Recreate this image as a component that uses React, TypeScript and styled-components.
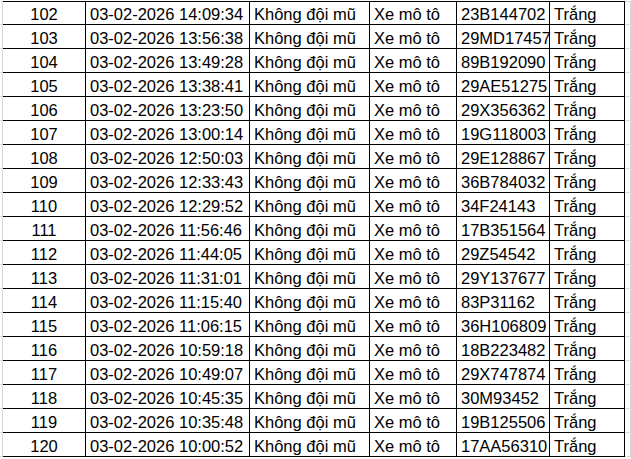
import { createGlobalStyle } from 'styled-components';
import styled from 'styled-components';

const GlobalStyle = createGlobalStyle`
  html, body {
    margin: 0;
    padding: 0;
    background: #ffffff;
  }
  body {
    font-family: 'Liberation Sans', Arial, sans-serif;
    color: #000000;
  }
`;

const Sheet = styled.div`
  width: 631px;
  height: 459px;
  padding-top: 1px;
  box-sizing: border-box;
  overflow: hidden;
  background: #ffffff;
`;

const Table = styled.table`
  border-collapse: separate;
  border-spacing: 0;
  table-layout: fixed;
  width: 631px;
  font-size: 16.5px;
  line-height: 19px;
`;

const Column = styled.col<{ $w: number }>`
  width: ${({ $w }) => $w}px;
`;

const Row = styled.tr<{ $first?: boolean }>`
  height: 24px;

  td {
    border-top: ${({ $first }) => ($first ? '1px solid #000' : 'none')};
  }

  td.gap {
    border-top-color: #d9d9d9;
  }
`;

const Cell = styled.td<{ $align?: 'left' | 'center' }>`
  height: 23px;
  padding: 0 4px;
  box-sizing: border-box;
  vertical-align: bottom;
  text-align: ${({ $align }) => $align || 'left'};
  white-space: nowrap;
  overflow: visible;
  border-right: 1px solid #000;
  border-bottom: 1px solid #000;
`;

const GridCell = styled.td`
  padding: 0;
  border-right: 1px solid #d9d9d9;
  border-bottom: 1px solid #d9d9d9;
`;

const widths = [3, 83, 164, 120, 87, 93, 75, 6];

const rows: [number, string, string][] = [
  [102, '14:09:34', '23B144702'],
  [103, '13:56:38', '29MD17457'],
  [104, '13:49:28', '89B192090'],
  [105, '13:38:41', '29AE51275'],
  [106, '13:23:50', '29X356362'],
  [107, '13:00:14', '19G118003'],
  [108, '12:50:03', '29E128867'],
  [109, '12:33:43', '36B784032'],
  [110, '12:29:52', '34F24143'],
  [111, '11:56:46', '17B351564'],
  [112, '11:44:05', '29Z54542'],
  [113, '11:31:01', '29Y137677'],
  [114, '11:15:40', '83P31162'],
  [115, '11:06:15', '36H106809'],
  [116, '10:59:18', '18B223482'],
  [117, '10:49:07', '29X747874'],
  [118, '10:45:35', '30M93452'],
  [119, '10:35:48', '19B125506'],
  [120, '10:00:52', '17AA56310'],
];

const App = () => {
  return (
    <Sheet>
      <GlobalStyle />
      <Table>
        <colgroup>
          {widths.map((w, i) => (
            <Column key={i} $w={w} />
          ))}
        </colgroup>
        <tbody>
          {rows.map(([no, time, plate], i) => (
            <Row key={no} $first={i === 0}>
              <GridCell className="gap" />
              <Cell $align="center">{no}</Cell>
              <Cell>03-02-2026 {time}</Cell>
              <Cell>Không đội mũ</Cell>
              <Cell>Xe mô tô</Cell>
              <Cell>{plate}</Cell>
              <Cell>Trắng</Cell>
              <GridCell className="gap" />
            </Row>
          ))}
        </tbody>
      </Table>
    </Sheet>
  );
};

export default App;
